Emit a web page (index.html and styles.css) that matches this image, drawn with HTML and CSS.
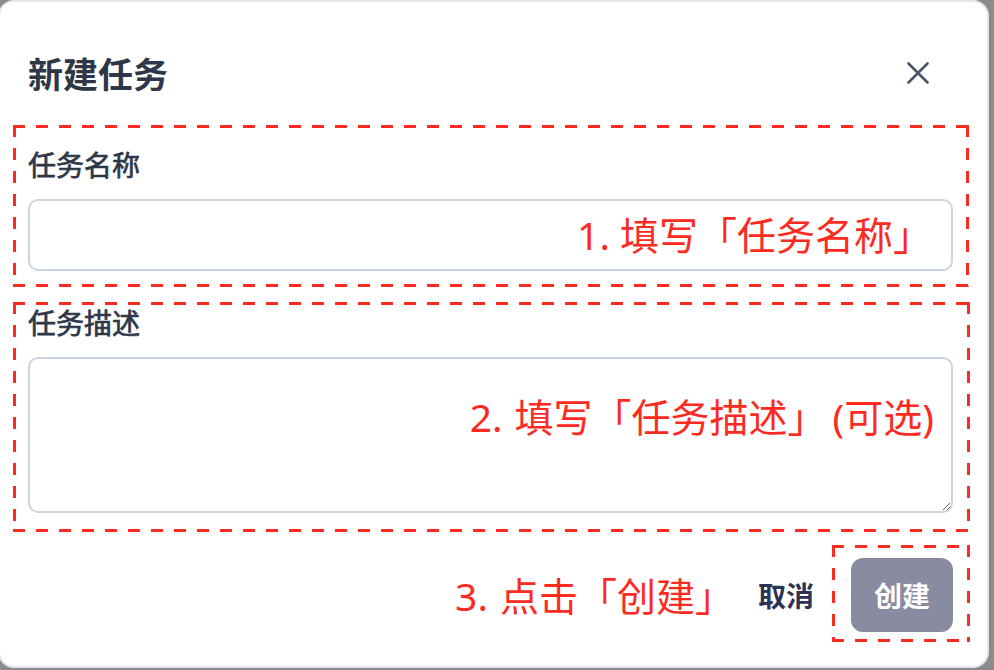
FILE: index.html
```html
<!DOCTYPE html>
<html lang="zh-CN">
<head>
<meta charset="utf-8">
<title>新建任务</title>
<link rel="stylesheet" href="styles.css">
</head>
<body>
<div class="modal">
  <header class="modal-header">
    <h2 class="modal-title">新建任务</h2>
    <button class="close-btn" aria-label="关闭">
      <svg width="22" height="22" viewBox="0 0 22 22"><path d="M1.5 1.5L20.5 20.5M20.5 1.5L1.5 20.5" stroke="#4a5568" stroke-width="2.6" stroke-linecap="round" fill="none"/></svg>
    </button>
  </header>
  <div class="modal-body">
    <div class="field">
      <label class="field-label">任务名称</label>
      <div class="input-wrap">
        <input class="input" type="text">
        <span class="hint hint-name">1. 填写「任务名称」</span>
      </div>
      <span class="annot annot-name"></span>
    </div>
    <div class="field">
      <label class="field-label">任务描述</label>
      <div class="input-wrap">
        <textarea class="input textarea"></textarea>
        <span class="hint hint-desc">2. 填写「任务描述」<span class="opt">(可选)</span></span>
      </div>
      <span class="annot annot-desc"></span>
    </div>
  </div>
  <footer class="modal-footer">
    <span class="hint-step">3. 点击「创建」</span>
    <button class="btn-cancel">取消</button>
    <div class="create-wrap">
      <button class="btn-create">创建</button>
      <span class="annot annot-create"></span>
    </div>
  </footer>
</div>
</body>
</html>
```

FILE: styles.css
```css
* { box-sizing: border-box; }
html, body { margin: 0; height: 100%; }
body {
  background: #8b8b8b;
  overflow: hidden;
  font-family: "Noto Sans CJK SC", "Noto Sans", sans-serif;
}
.modal {
  width: 991px;
  height: 668px;
  margin-left: -2px;
  background: #fff;
  border: 2px solid #e2e6ee;
  border-radius: 16px;
  display: flex;
  flex-direction: column;
}
.modal-header {
  display: flex;
  align-items: center;
  justify-content: space-between;
  padding: 50px 58px 0 28px;
}
.modal-title {
  margin: 0;
  font-size: 35px;
  line-height: 42px;
  font-weight: 700;
  color: #2d3748;
}
.close-btn {
  border: 0;
  background: none;
  padding: 0;
  width: 22px;
  height: 22px;
  display: flex;
}
.modal-body {
  padding: 49px 34px 0 28px;
  display: flex;
  flex-direction: column;
  gap: 30px;
}
.field {
  position: relative;
  display: flex;
  flex-direction: column;
}
.field-label {
  font-size: 28px;
  line-height: 42px;
  font-weight: 400;
  -webkit-text-stroke: 0.7px #2d3748;
  color: #2d3748;
  margin-bottom: 14px;
}
.input-wrap { position: relative; }
.input {
  display: block;
  width: 100%;
  height: 72px;
  border: 2px solid #cbd5e0;
  border-radius: 10px;
  background: #fff;
  outline: none;
  padding: 0 20px;
  font: inherit;
}
.textarea {
  height: 156px;
  resize: vertical;
  padding: 12px 20px;
}
.hint, .hint-step {
  font-family: "Noto Sans", "Noto Sans CJK SC", sans-serif;
  color: #fd2b1f;
  font-size: 39px;
  line-height: 39px;
  white-space: nowrap;
}
.hint { position: absolute; }
.hint-name { right: 21px; top: 16px; }
.hint-desc { right: 19px; top: 40px; word-spacing: 2px; }
.hint-desc .opt { margin-left: 6px; }
.hint-step { word-spacing: 2px; }

.annot {
  position: absolute;
  pointer-events: none;
  background:
    linear-gradient(to right, #fd2b1f 12px, transparent 12px) left top / 23px 3px repeat-x,
    linear-gradient(to right, #fd2b1f 12px, transparent 12px) left bottom / 23px 3px repeat-x,
    linear-gradient(to bottom, #fd2b1f 12px, transparent 12px) left top / 3px 23px repeat-y,
    linear-gradient(to bottom, #fd2b1f 12px, transparent 12px) right top / 3px 23px repeat-y;
}
.annot-name { top: -18px; left: -15px; right: -16px; bottom: -16px; }
.annot-desc { top: 1px; left: -15px; right: -17px; bottom: -19px; }

.modal-footer {
  display: flex;
  justify-content: flex-end;
  align-items: center;
  padding: 45px 34px 0 28px;
}
.btn-cancel {
  height: 74px;
  padding: 0 24px;
  font-family: inherit;
  font-size: 28px;
  font-weight: 700;
  color: #2c3352;
  background: none;
  border: 0;
}
.create-wrap {
  position: relative;
  margin-left: 13px;
}
.btn-create {
  display: block;
  width: 102px;
  height: 74px;
  border-radius: 12px;
  background: #898ba0;
  color: #fff;
  font-family: inherit;
  font-size: 28px;
  font-weight: 700;
  border: 0;
}
.annot-create { top: -13px; left: -19px; right: -17px; bottom: -10px; }
```
